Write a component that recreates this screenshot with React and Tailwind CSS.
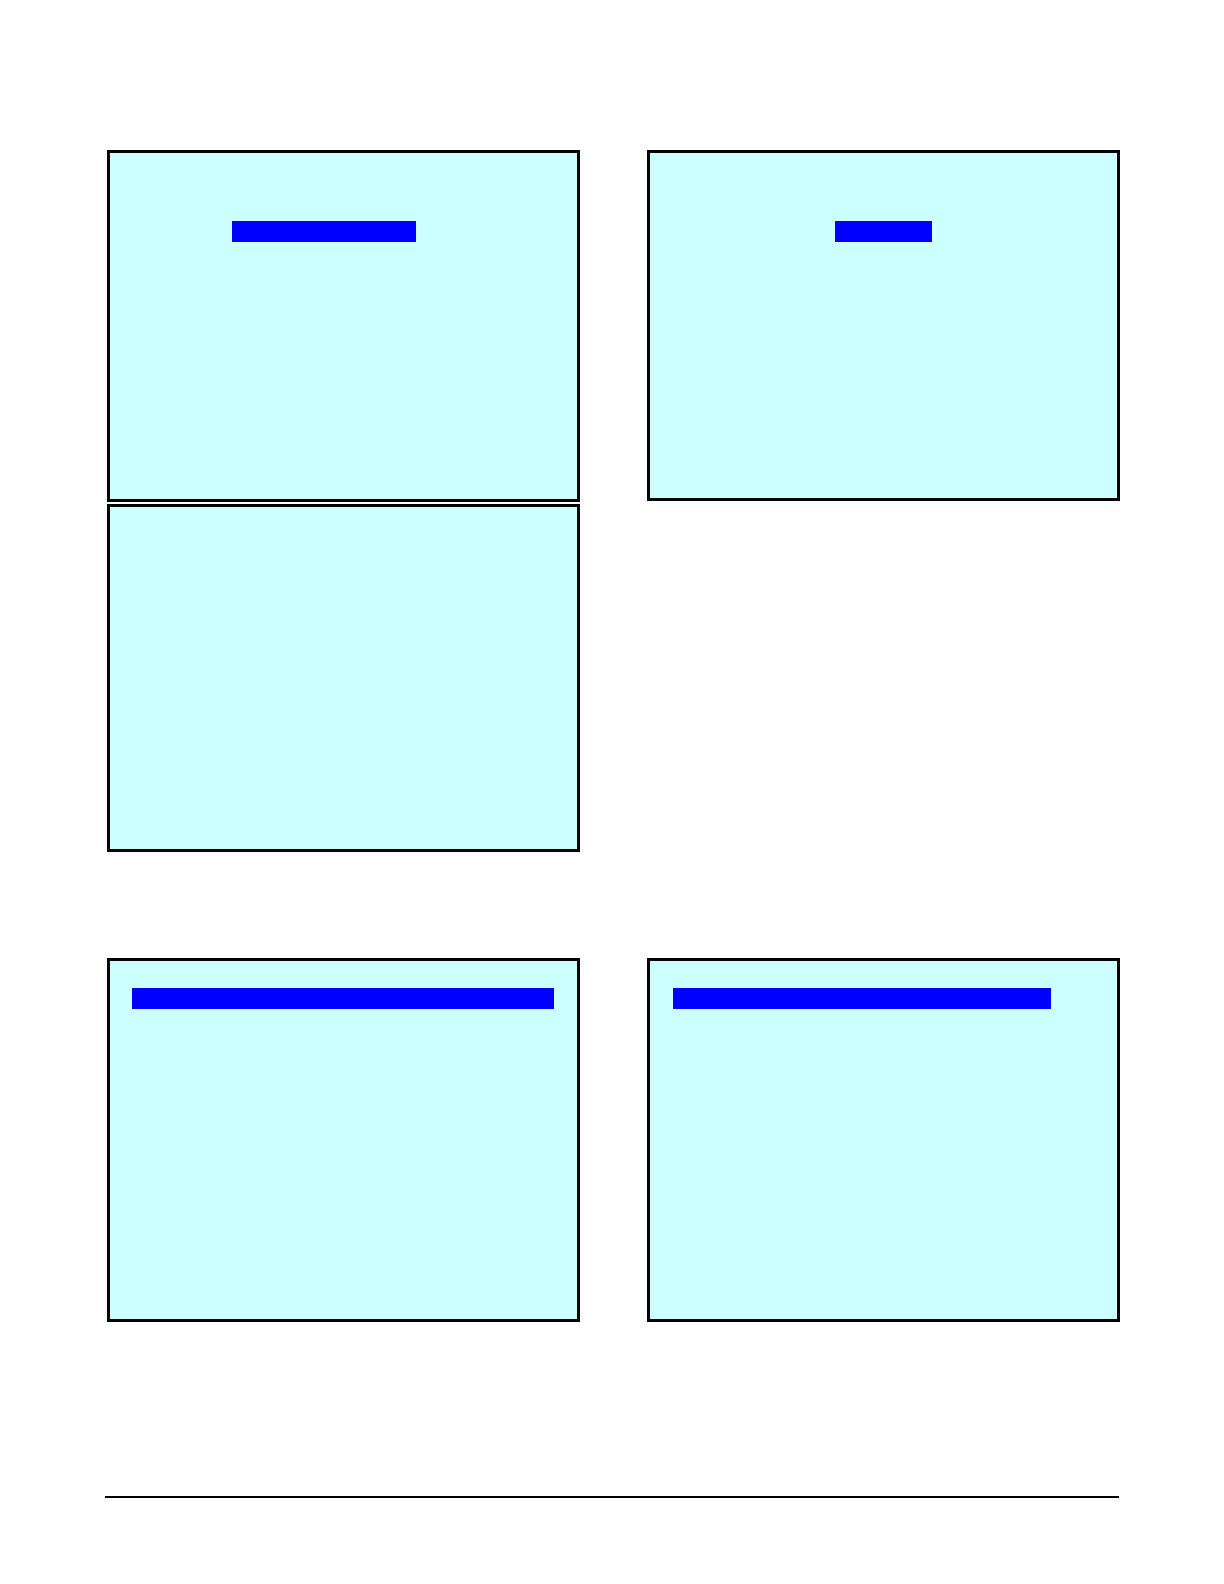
import React from "react";
import clsx from "clsx";

function Panel({ className, children }) {
  return (
    <section className={clsx("border-3 border-black bg-[#ccffff]", className)}>
      {children}
    </section>
  );
}

function Bar({ className }) {
  return <div className={clsx("h-[21px] bg-[#0000ff]", className)} />;
}

export default function App() {
  return (
    <div className="min-h-screen bg-white pt-[150px] pb-[86px]">
      <main className="pr-[104px] pl-[107px]">
        {/* Upper panels: two stacked on the left, one on the right */}
        <div className="grid grid-cols-2 items-start gap-x-[67px]">
          <div className="flex flex-col gap-0.5">
            <Panel className="min-h-[352px] pt-[68px]">
              <Bar className="ml-[122px] w-[184px]" />
            </Panel>
            <Panel className="min-h-[348px]" />
          </div>
          <Panel className="min-h-[351px] pt-[68px]">
            <Bar className="mx-auto w-[97px]" />
          </Panel>
        </div>

        {/* Lower panels */}
        <div className="mt-[106px] grid grid-cols-2 gap-x-[67px]">
          <Panel className="min-h-[364px] pt-[27px] pr-[23px] pl-[22px]">
            <Bar className="w-full" />
          </Panel>
          <Panel className="min-h-[364px] pt-[27px] pr-[66px] pl-[23px]">
            <Bar className="w-full" />
          </Panel>
        </div>
      </main>

      <footer className="mx-[105px] mt-[174px]">
        <hr className="border-t-2 border-black" />
      </footer>
    </div>
  );
}
